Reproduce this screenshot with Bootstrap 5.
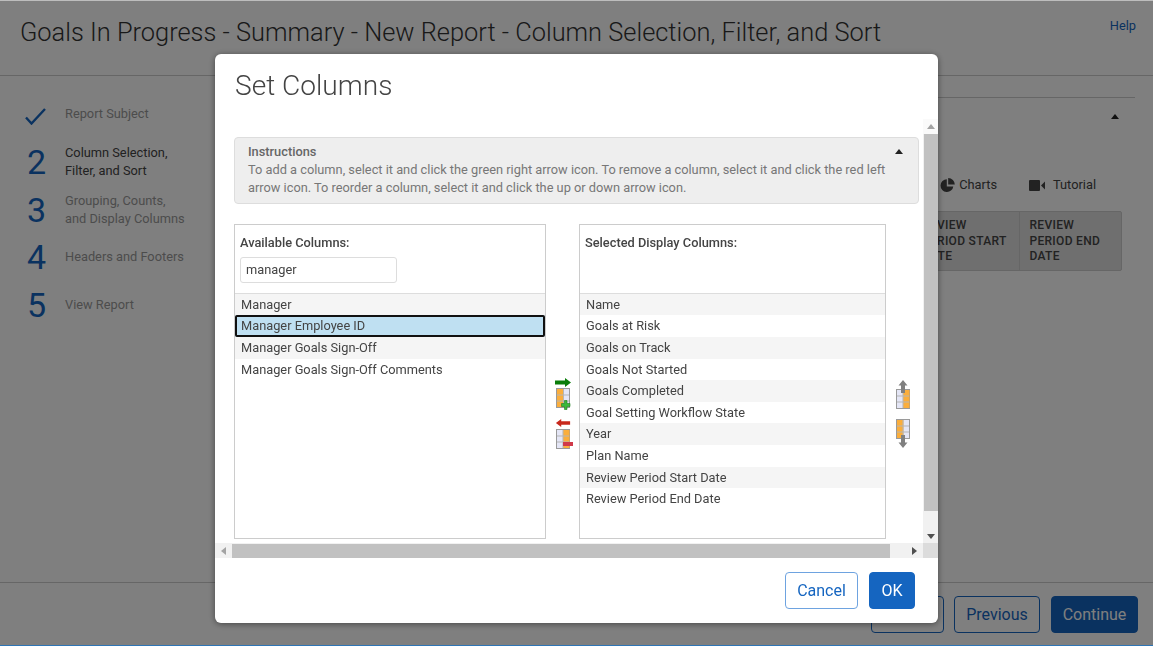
<!DOCTYPE html>
<html lang="en">
<head>
<meta charset="utf-8">
<title>Set Columns</title>
<link href="https://cdn.jsdelivr.net/npm/bootstrap@5.3.0/dist/css/bootstrap.min.css" rel="stylesheet">
<style>
html,body{height:100%;overflow:hidden}
body{font-family:Roboto,"Liberation Sans",sans-serif;font-size:12.8px;color:#444;background:#fff}
.pg{height:646px;position:relative}
.pg-head{height:76px;border-bottom:1px solid #ccc;padding:15px 17px 0 20px}
.pg-title{font-size:25.4px;font-weight:300;line-height:34px;margin:0;color:#333}
.help{color:#1565c0;font-size:12.8px;line-height:22px;text-decoration:none}
.pg-main{height:506px}
.steps{width:215px;padding:14px 0 0 25px;flex:none}
.stp{height:48px;color:#999;line-height:18px;margin-bottom:-.2px}
.stp.on{color:#444}
.stp-n{width:40px;font-size:34px;line-height:48px;color:#1565c0;font-weight:400;flex:none;padding-left:2px}
.content{padding:21px 18px 0 0}
.sect{border-top:1px solid #ccc;height:114px;padding:7px 16px 0 0;text-align:right}
.up{display:inline-block;width:0;height:0;border:4px solid transparent;border-top:0;border-bottom:5px solid #222}
.toolrow{height:20px;margin-top:-36px;padding-right:39px;position:relative}
.tb{width:210px;margin:16px 13px 0 auto;background:#dedede;border:1px solid #ccc;border-radius:2px;font-weight:500;line-height:15.5px;color:#444;letter-spacing:.3px;font-size:12px}
.tb>div{padding:6px 0 0 9px;height:58px;white-space:nowrap}
.tb>div+div{border-left:1px solid #ccc}
.tb .w-a{width:107px}.tb .w-b{width:102px}
.pg-foot{height:64px;border-top:1px solid #ccc;padding:13px 15px 0 0}
.bf{font-size:16px;height:37px;line-height:35px;padding:0;border:1px solid #1565c0;border-radius:4px;color:#1565c0;background:#fff;text-align:center}
.bf.w1{width:73px}.bf.w2{width:86px;margin-left:2px}.bf.w3{width:87px;background:#1565c0;color:#fff;margin-left:3px}
.bar{position:fixed;left:0;right:0;bottom:0;height:1px;background:#2e75b6;z-index:2000}
.topline{position:fixed;left:0;right:0;top:0;height:1px;background:#bdbdbd;z-index:2000}
.dlg{width:723px;max-width:none;margin:54px 0 0 215px;height:569px}
.dlg .modal-content{height:569px;border-radius:6px;border:0;box-shadow:0 1px 6px rgba(0,0,0,.45)}
.dlg .modal-header{height:65px;border:0;padding:14px 20px 0;align-items:flex-start}
.dlg .modal-title{font-size:28.1px;font-weight:300;line-height:36px;color:#444}
.scroller{height:439px;display:grid;grid-template-columns:708px 15px;grid-template-rows:424px 15px}
.viewp{overflow:hidden;padding:18px 4px 0 19px}
.instr{height:67px;background:#eee;border:1px solid #ddd;border-radius:4px;padding:5px 13px;color:#777;line-height:18px;position:relative;padding-right:30px}
.instr strong{font-weight:500;color:#666;display:block}
.instr .up{position:absolute;right:15px;top:11px}
.lists{margin-top:20px;height:315px}
.colbox{width:312px;height:315px;border:1px solid #ccc;flex:none}
.colbox.sel{width:307px}
.colhd{height:68.8px;padding:10px 5px 0;border-bottom:1px solid #ddd;color:#333}
.colhd strong{font-weight:500;display:block;line-height:16px;color:#444}
.flt{display:block;width:157px;height:26px;margin-top:6px;padding:0 5px 2px;border:1px solid #ddd;border-radius:3px;font-size:12.8px;line-height:22px;color:#444;font-family:inherit}
.itm{height:21.6px;line-height:21.6px;padding:0 6px;color:#444;font-size:12.8px}
.itm:nth-child(odd){background:#f5f5f5}
.itm.pick{background:#bfe0f2;outline:2px solid #111;outline-offset:-2px;border-radius:2px}
.itm.plain{background:none}
.mv{width:33px;flex:none;padding-top:154px}
.ord{width:33px;flex:none;padding-top:156px}
.ic{display:block}
.ic.g1{margin-top:1px}.ic.g2{margin-top:9px}.ic.g3{margin-top:2px;margin-left:2px}.ic.g4{margin-top:10px}
.sb-v{background:#f1f1f1;display:flex;flex-direction:column;align-items:center}
.sb-btn{height:15px;width:100%;display:flex;align-items:center;justify-content:center;flex:none}
.sb-v .sb-btn.top{background:#fafafa}
.sb-v .sb-btn.bot{margin-top:auto;padding-top:2px}
.sb-th{background:#c1c1c1;flex:none}
.sb-v .sb-th{width:14px;height:377px}
.sb-h{background:#f1f1f1;display:flex;align-items:center}
.sb-h .sb-btn{width:17px;height:100%}
.sb-h .sb-btn.end{flex:1 1 auto;justify-content:flex-end;padding-right:6px}
.sb-h .sb-th{height:14px;width:658px}
.sb-c{background:#dcdcdc}
.ar{width:0;height:0;border:4px solid transparent}
.ar.u{border-top:0;border-bottom:5px solid #a3a3a3}
.ar.d{border-bottom:0;border-top:5px solid #505050}
.ar.l{border-left:0;border-right:5px solid #a3a3a3}
.ar.r{border-right:0;border-left:5px solid #505050}
.dlg .modal-footer{height:65px;border:0;padding:14px 23px 0 0;align-items:flex-start;gap:11px;flex-wrap:nowrap}
.dlg .modal-footer>*{margin:0}
.bm{height:37px;font-size:16px;line-height:35px;padding:0;border-radius:4px;border:1px solid #6ea3e0;color:#1565c0;background:#fff}
.bm.c{width:73px}.bm.o{width:46px;background:#1565c0;border-color:#1565c0;color:#fff}
.chk{margin-left:-2px;vertical-align:1px}
.vid{margin-left:32px;margin-right:7px}
</style>
</head>
<body>
<div class="pg d-flex flex-column">
  <div class="pg-head d-flex justify-content-between">
    <h1 class="pg-title">Goals In Progress - Summary - New Report - Column Selection, Filter, and Sort</h1>
    <a class="help" href="#">Help</a>
  </div>
  <div class="pg-main d-flex">
    <div class="steps">
      <div class="stp d-flex align-items-center">
        <div class="stp-n"><svg class="chk" width="21" height="17" viewBox="0 0 21 17" fill="none" stroke="#1565c0" stroke-width="2.400"><path d="M1 9.500l5.500 6L20 1"/></svg></div><div>Report Subject</div>
      </div>
      <div class="stp on d-flex align-items-center"><div class="stp-n">2</div><div>Column Selection,<br>Filter, and Sort</div></div>
      <div class="stp d-flex align-items-center"><div class="stp-n">3</div><div>Grouping, Counts,<br>and Display Columns</div></div>
      <div class="stp d-flex align-items-center"><div class="stp-n">4</div><div>Headers and Footers</div></div>
      <div class="stp d-flex align-items-center"><div class="stp-n">5</div><div>View Report</div></div>
    </div>
    <div class="content flex-grow-1">
      <div class="sect"><span class="up"></span></div>
      <div class="toolrow d-flex justify-content-end align-items-center">
        <svg width="15" height="15" viewBox="0 0 15 15" class="me-1"><path d="M6.800 1.200A6.400 6.400 0 1 0 13.300 8.400H6.800z" fill="#444"/><path d="M8.200 0a6.600 6.600 0 0 1 6.600 6.600H8.200z" fill="#444"/></svg>
        <span>Charts</span>
        <svg class="vid" width="17" height="11" viewBox="0 0 17 11"><rect width="11" height="11" rx="1" fill="#444"/><path d="M12 5.500l4-4v8z" fill="#444"/></svg>
        <span>Tutorial</span>
      </div>
      <div class="tb d-flex">
        <div class="w-a">REVIEW<br>PERIOD START<br>DATE</div>
        <div class="w-b">REVIEW<br>PERIOD END<br>DATE</div>
      </div>
    </div>
  </div>
  <div class="pg-foot d-flex justify-content-end gap-2">
    <button class="btn bf w1" type="button">Save</button>
    <button class="btn bf w2" type="button">Previous</button>
    <button class="btn bf w3" type="button">Continue</button>
  </div>
</div>

<div class="modal-backdrop show"></div>
<div class="topline"></div>
<div class="bar"></div>
<div class="modal d-block" tabindex="-1">
  <div class="modal-dialog dlg">
    <div class="modal-content">
      <div class="modal-header"><h5 class="modal-title">Set Columns</h5></div>
      <div class="scroller">
        <div class="viewp">
          <div class="instr">
            <span class="up"></span>
            <strong>Instructions</strong>
            To add a column, select it and click the green right arrow icon. To remove a column, select it and click the red left arrow icon. To reorder a column, select it and click the up or down arrow icon.
          </div>
          <div class="lists d-flex">
            <div class="colbox">
              <div class="colhd">
                <strong>Available Columns:</strong>
                <input class="flt" type="text" value="manager" aria-label="Filter">
              </div>
              <div>
                <div class="itm">Manager</div>
                <div class="itm pick">Manager Employee ID</div>
                <div class="itm">Manager Goals Sign-Off</div>
                <div class="itm plain">Manager Goals Sign-Off Comments</div>
              </div>
            </div>
            <div class="mv d-flex flex-column align-items-center">
              <svg class="ic" width="16" height="9" viewBox="0 0 16 9"><path d="M0 2.500h10V0l6 4.500L10 9V6.500H0z" fill="#0a7d0a"/></svg>
              <svg class="ic g1" width="16" height="22" viewBox="0 0 16 22">
                <rect x="1.500" y=".5" width="13" height="19" fill="#e4e6f6" stroke="#9a9a9a"/>
                <rect x="2" y="1" width="6.500" height="18" fill="#fbae3c"/>
                <path d="M2 7h12M2 13h12M8.500 1v18" stroke="#b5b5b5"/>
                <path d="M9.500 12.500h2.500v3h3v3h-3v3h-2.500v-3h-3v-3h3z" fill="#3bb83b" stroke="#1d7d1d" stroke-width=".6"/>
              </svg>
              <svg class="ic g2" width="16" height="8" viewBox="0 0 16 9"><path d="M16 2.500H6V0L0 4.500 6 9V6.500h10z" fill="#c8281c"/></svg>
              <svg class="ic g3" width="18" height="22" viewBox="0 0 18 22">
                <rect x="1.500" y=".5" width="13" height="19" fill="#e4e6f6" stroke="#9a9a9a"/>
                <rect x="8" y="1" width="6.500" height="18" fill="#fbae3c"/>
                <path d="M2 7h12M2 13h12M8 1v18" stroke="#b5b5b5"/>
                <rect x="8" y="13" width="10" height="4" fill="#d03a4a"/>
              </svg>
            </div>
            <div class="colbox sel">
              <div class="colhd"><strong>Selected Display Columns:</strong></div>
              <div>
                <div class="itm">Name</div>
                <div class="itm">Goals at Risk</div>
                <div class="itm">Goals on Track</div>
                <div class="itm">Goals Not Started</div>
                <div class="itm">Goals Completed</div>
                <div class="itm">Goal Setting Workflow State</div>
                <div class="itm">Year</div>
                <div class="itm">Plan Name</div>
                <div class="itm">Review Period Start Date</div>
                <div class="itm plain">Review Period End Date</div>
              </div>
            </div>
            <div class="ord d-flex flex-column align-items-center">
              <svg class="ic" width="16" height="29" viewBox="0 0 16 29">
                <rect x="1.500" y="9.500" width="13" height="19" fill="#e4e6f6" stroke="#9a9a9a"/>
                <rect x="8" y="10" width="6.500" height="18" fill="#fbae3c"/>
                <path d="M2 16h12M2 22h12M8 10v18" stroke="#b5b5b5"/>
                <path d="M8 0l4.500 5.500H10V13H6V5.500H3.500z" fill="#808080"/>
              </svg>
              <svg class="ic g4" width="16" height="29" viewBox="0 0 16 29">
                <rect x="1.500" y=".5" width="13" height="19" fill="#e4e6f6" stroke="#9a9a9a"/>
                <rect x="2" y="1" width="6.500" height="18" fill="#fbae3c"/>
                <path d="M2 7h12M2 13h12M8 1v18" stroke="#b5b5b5"/>
                <path d="M8 29l4.500-5.500H10V16H6v7.500H3.500z" fill="#808080"/>
              </svg>
            </div>
          </div>
        </div>
        <div class="sb-v">
          <div class="sb-btn top"><span class="ar u"></span></div>
          <div class="sb-th"></div>
          <div class="sb-btn bot"><span class="ar d"></span></div>
        </div>
        <div class="sb-h">
          <div class="sb-btn"><span class="ar l"></span></div>
          <div class="sb-th"></div>
          <div class="sb-btn end"><span class="ar r"></span></div>
        </div>
        <div class="sb-c"></div>
      </div>
      <div class="modal-footer">
        <button class="btn bm c" type="button">Cancel</button>
        <button class="btn bm o" type="button">OK</button>
      </div>
    </div>
  </div>
</div>
<script src="https://cdn.jsdelivr.net/npm/bootstrap@5.3.0/dist/js/bootstrap.bundle.min.js"></script>
</body>
</html>
